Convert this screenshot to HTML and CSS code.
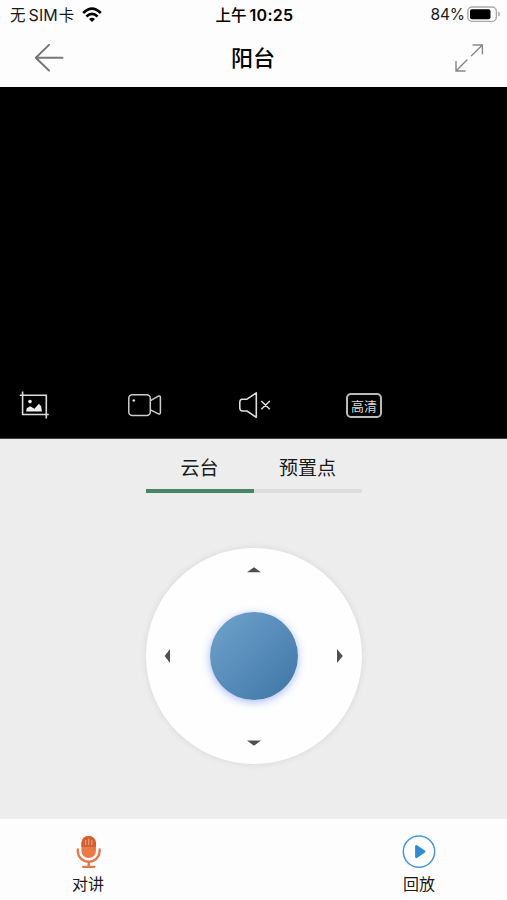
FILE: index.html
```html
<!DOCTYPE html>
<html lang="zh-CN">
<head>
<meta charset="utf-8">
<title>阳台</title>
<link rel="stylesheet" href="styles.css">
</head>
<body>
<div class="app">
  <header class="status">
    <div class="carrier"><span class="han">无</span><span class="latin">SIM</span><span class="han">卡</span>
      <svg class="wifi" width="20" height="16" viewBox="0 0 20 16" fill="none" stroke="#000" stroke-width="2.6"><path d="M1.2 6Q10-2.6 18.8 6M4.4 9.5Q10 4.2 15.6 9.5"/><path d="M7 12Q10 9.4 13 12L10 15Z" fill="#000" stroke="none"/></svg>
    </div>
    <div class="clock"><span class="han">上午</span><span class="time">10:25</span></div>
    <div class="power"><span class="latin">84%</span>
      <svg width="34" height="16" viewBox="0 0 34 16"><rect x=".8" y="1" width="28.6" height="14.4" rx="4.4" fill="none" stroke="#aaa" stroke-width="1.4"/><rect x="3" y="3.2" width="20.5" height="10" rx="2" fill="#000"/><path d="M31.2 5.5Q33 6 33 8T31.2 10.5Z" fill="#aaa"/></svg>
    </div>
  </header>
  <nav class="nav">
    <svg width="30" height="28" viewBox="0 0 30 28" fill="none" stroke="#777" stroke-width="2" stroke-linecap="round" stroke-linejoin="round"><path d="M15 .9L1.8 13.7L15 26.5M2 13.7H28.5"/></svg>
    <h1>阳台</h1>
    <svg width="30" height="30" viewBox="0 0 30 30" fill="none" stroke="#888" stroke-width="1.4"><path d="M18.6 2H28.4V11.2M28.4 2L17.2 13M13.4 16.6L2 28M2 18V28H11.6"/></svg>
  </nav>
  <main class="video">
    <div class="tools">
      <svg width="36" height="34" viewBox="19 388 36 34" fill="none" stroke="#ddd" stroke-width="1.6"><path d="M19.7 395.3H46.3V418.5M22.6 391.5V414.5H48.8"/><circle cx="30" cy="401.6" r="1.8" fill="#eee" stroke="none"/><path d="M26.2 411.4L26.7 408.2L30.2 406.2L34.4 408.8L39 403.7L41.2 406.4L42 411.4Z" fill="#eee" stroke="none"/></svg>
      <svg width="36" height="34" viewBox="128 388 36 34" fill="none" stroke="#ccc" stroke-width="1.5" stroke-linejoin="round"><rect x="128.8" y="394.8" width="21.5" height="20.6" rx="3.5"/><path d="M150.4 400.6L158.4 396.2Q160.4 395.5 160.4 397.5V412.5Q160.4 414.6 158.4 413.8L150.4 409.8"/><circle cx="133.8" cy="400.5" r="1.3" fill="#ddd" stroke="none"/></svg>
      <svg width="36" height="34" viewBox="237 388 36 34" fill="none" stroke="#ddd" stroke-width="1.6" stroke-linejoin="round"><path d="M256.3 392.8V417.3L247 411H242Q240 410.5 239.8 408.5V402Q240 399.5 242 399.2H247ZM261.3 401L269.8 409.3M269.8 401L261.3 409.3"/></svg>
      <div class="quality">高清</div>
    </div>
  </main>
  <section class="panel">
    <div class="tabs"><div class="tab active">云台</div><div class="tab">预置点</div></div>
    <div class="dial">
      <svg class="up" width="14" height="6" viewBox="0 0 14 6"><path d="M0 5.2L7 .3L14 5.2Z"/></svg>
      <svg class="left" width="6" height="14" viewBox="0 0 6 14"><path d="M6 0L.6 7L6 14Z"/></svg>
      <div class="knob"></div>
      <svg class="right" width="6" height="14" viewBox="0 0 6 14"><path d="M0 0L5.8 7L0 14Z"/></svg>
      <svg class="down" width="14" height="6" viewBox="0 0 14 6"><path d="M0 .4L7 5.7L14 .4Z"/></svg>
    </div>
  </section>
  <footer class="actions">
    <div class="action">
      <svg width="34" height="34" viewBox="0 0 34 34"><rect x="10.4" y="1" width="14.6" height="22" rx="7.2" fill="#ea7a48"/><path d="M10.4 12V8.2A7.3 7.2 0 0 1 25 8.2V12Z" fill="#d4602f"/><path d="M14.6 5V10M17.7 3.5V10M20.9 5V10" stroke="#f1a27e" stroke-width="1.1"/><path d="M6.8 14.5V16A10.9 10.7 0 0 0 28.6 16V14.5M17.7 27V31.5M12.1 31.8H23.4" fill="none" stroke="#e2774a" stroke-width="2.3" stroke-linecap="round"/></svg>
      <span>对讲</span>
    </div>
    <div class="action">
      <svg width="34" height="34" viewBox="0 0 34 34"><circle cx="17" cy="16.6" r="15.7" fill="none" stroke="#4997d5" stroke-width="1.5"/><path d="M14.3 11.3L22.2 16.6L14.3 21.9Z" fill="#318bd2" stroke="#318bd2" stroke-width="2.4" stroke-linejoin="round"/></svg>
      <span>回放</span>
    </div>
  </footer>
</div>
</body>
</html>
```
FILE: styles.css
```css
* { box-sizing: border-box; }
body { margin: 0; font-family: "Noto Sans CJK SC", sans-serif; color: #1a1a1a; }
svg { display: block; flex: none; }
.app { width: 507px; height: 900px; display: flex; flex-direction: column; background: #fdfdfd; overflow: hidden; }
.status { height: 30px; display: grid; grid-template-columns: 1fr auto 1fr; align-items: center; padding: 0 6px 0 10px; font-size: 16px; line-height: 30px; }
.carrier, .clock, .power { display: flex; align-items: center; }
.han { margin-top: -2px; font-size: 15.5px; }
.latin, .time { font-family: Inter, sans-serif; }
.carrier .latin { margin: 0 1px 0 3px; letter-spacing: .1px; }
.wifi { margin: -1px 0 0 8px; }
.clock { gap: 3px; font-weight: 500; color: #000; transform: translateX(-1px); }
.time { font-weight: 600; letter-spacing: .3px; }
.power { justify-content: flex-end; gap: 2px; }
.power .latin { font-size: 15.5px; letter-spacing: -.1px; }
.power svg { margin-top: -2px; }
.nav { height: 57px; display: grid; grid-template-columns: 1fr auto 1fr; align-items: center; padding: 0 23px 2px 34px; }
.nav h1 { margin: 0 0 3px; font-size: 22px; font-weight: 500; line-height: 32px; color: #000; transform: translateX(-6px); }
.nav svg:last-child { justify-self: end; }
.video { height: 352px; background: #000; display: flex; align-items: flex-end; border-bottom: 1px solid #444; }
.tools { display: flex; align-items: center; gap: 73px; padding: 0 0 16px 19px; }
.quality { width: 36px; height: 25px; border: 2px solid #bbb; border-radius: 5px; color: #ddd; font-size: 13px; line-height: 21px; text-align: center; }
.panel { height: 380px; background: #ededed; display: flex; flex-direction: column; align-items: center; }
.tabs { width: 216px; height: 54px; display: grid; grid-template-columns: 1fr 1fr; }
.tab { text-align: center; font-size: 19px; line-height: 50px; padding-top: 3px; height: 54px; border-bottom: 4px solid #dcdcdc; }
.active { border-color: #498469; }
.dial { width: 216px; height: 216px; margin-top: 55px; border-radius: 50%; background: #fefefe; box-shadow: 0 0 7px rgba(0,0,0,.09); display: grid; grid-template-columns: 1fr 88px 1fr; grid-template-rows: 1fr 88px 1fr; padding: 18px; place-items: center; fill: #505050; }
.up { grid-area: 1 / 2; align-self: start; margin-top: 1px; }
.left { grid-area: 2 / 1; justify-self: start; }
.knob { grid-area: 2 / 2; width: 88px; height: 88px; border-radius: 50%; background: linear-gradient(135deg, #70a4cc, #3e74a7); box-shadow: 0 2px 8px rgba(65,105,225,.45); }
.right { grid-area: 2 / 3; justify-self: end; margin-right: 1px; }
.down { grid-area: 3 / 2; align-self: end; }
.actions { height: 81px; display: flex; justify-content: space-between; padding: 16px 71px 0; }
.action { display: flex; flex-direction: column; align-items: center; font-size: 16px; line-height: 24px; gap: 2px; }
```
